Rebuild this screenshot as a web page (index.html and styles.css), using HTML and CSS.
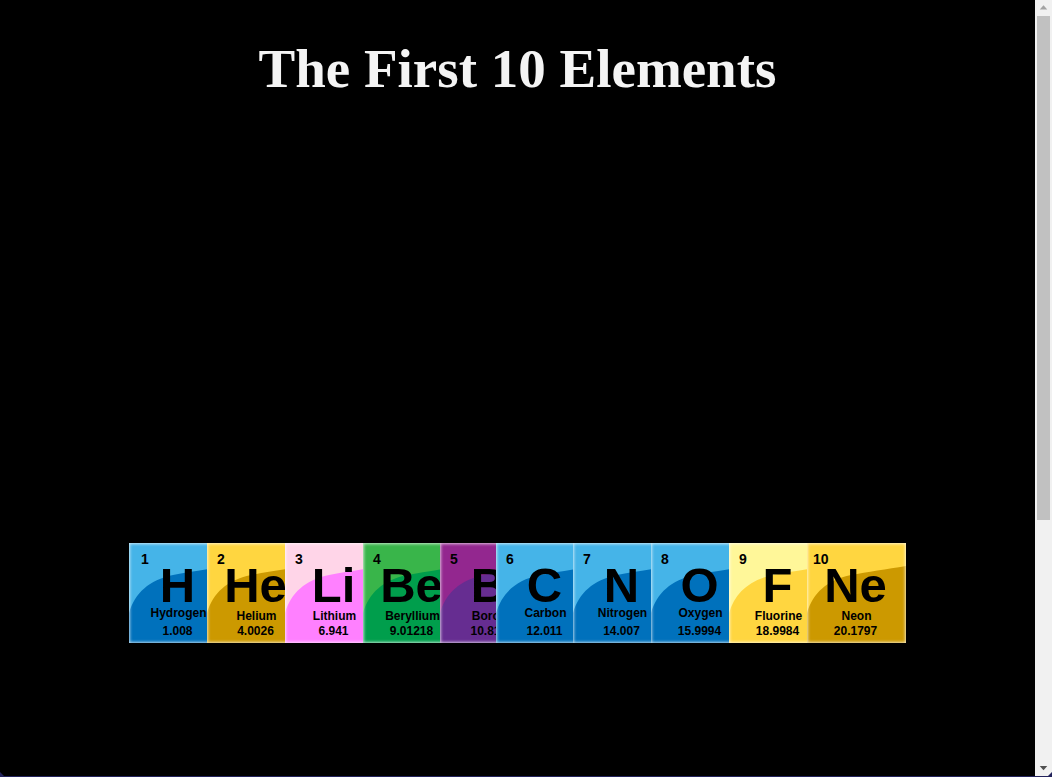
FILE: index.html
```html
<!DOCTYPE html>
<html lang="en">
<head>
    <meta charset="UTF-8">
    <meta name="viewport" content="width=device-width, initial-scale=1.0">
    <title>The First 10 Elements</title>
    <link rel="stylesheet" href="styles.css">
</head>
<body>
    <div class="page">
        <h1>The First 10 Elements</h1>
        <div class="table">
            <div class="tile w78 blue high"><div class="face"><svg class="curve" viewBox="0 0 99 100"><path d="M0 100V70C6 50 20 37 44 32C60 29 80 26 99 23V100Z"/></svg><span class="num one">1</span><span class="sym">H</span><span class="name">Hydrogen</span><span class="mass">1.008</span></div></div>
            <div class="tile w78 yellow"><div class="face"><svg class="curve" viewBox="0 0 99 100"><path d="M0 100V70C6 50 20 37 44 32C60 29 80 26 99 23V100Z"/></svg><span class="num">2</span><span class="sym">He</span><span class="name">Helium</span><span class="mass">4.0026</span></div></div>
            <div class="tile w78 pink"><div class="face"><svg class="curve" viewBox="0 0 99 100"><path d="M0 100V70C6 50 20 37 44 32C60 29 80 26 99 23V100Z"/></svg><span class="num">3</span><span class="sym">Li</span><span class="name">Lithium</span><span class="mass">6.941</span></div></div>
            <div class="tile w77 green"><div class="face"><svg class="curve" viewBox="0 0 99 100"><path d="M0 100V70C6 50 20 37 44 32C60 29 80 26 99 23V100Z"/></svg><span class="num">4</span><span class="sym">Be</span><span class="name">Beryllium</span><span class="mass">9.01218</span></div></div>
            <div class="tile w56 purple"><div class="face"><svg class="curve" viewBox="0 0 99 100"><path d="M0 100V70C6 50 20 37 44 32C60 29 80 26 99 23V100Z"/></svg><span class="num">5</span><span class="sym">B</span><span class="name">Boron</span><span class="mass">10.811</span></div></div>
            <div class="tile w77 blue high"><div class="face"><svg class="curve" viewBox="0 0 99 100"><path d="M0 100V70C6 50 20 37 44 32C60 29 80 26 99 23V100Z"/></svg><span class="num">6</span><span class="sym">C</span><span class="name">Carbon</span><span class="mass">12.011</span></div></div>
            <div class="tile w78 blue high"><div class="face"><svg class="curve" viewBox="0 0 99 100"><path d="M0 100V70C6 50 20 37 44 32C60 29 80 26 99 23V100Z"/></svg><span class="num">7</span><span class="sym">N</span><span class="name">Nitrogen</span><span class="mass">14.007</span></div></div>
            <div class="tile w78 blue high"><div class="face"><svg class="curve" viewBox="0 0 99 100"><path d="M0 100V70C6 50 20 37 44 32C60 29 80 26 99 23V100Z"/></svg><span class="num">8</span><span class="sym">O</span><span class="name">Oxygen</span><span class="mass">15.9994</span></div></div>
            <div class="tile w78 cream"><div class="face"><svg class="curve" viewBox="0 0 99 100"><path d="M0 100V70C6 50 20 37 44 32C60 29 80 26 99 23V100Z"/></svg><span class="num">9</span><span class="sym">F</span><span class="name">Fluorine</span><span class="mass">18.9984</span></div></div>
            <div class="tile w99 yellow"><div class="face"><svg class="curve" viewBox="0 0 99 100"><path d="M0 100V70C6 50 20 37 44 32C60 29 80 26 99 23V100Z"/></svg><span class="num ten">10</span><span class="sym">Ne</span><span class="name">Neon</span><span class="mass">20.1797</span></div></div>
        </div>
    </div>
    <div class="scrollbar">
        <svg class="arrow" viewBox="0 0 17 17"><path d="M8.5 5.5L12.5 10H4.5Z"/></svg>
        <div class="thumb"></div>
        <svg class="arrow bottom" viewBox="0 0 17 17"><path d="M8.5 11L12.5 6.5H4.5Z"/></svg>
    </div>
    <div class="corner left"></div>
    <div class="corner right"></div>
</body>
</html>
```

FILE: styles.css
```css
html, body {
    height: 100%;
}
body {
    margin: 0;
    position: relative;
    display: flex;
    height: 777px;
    overflow: hidden;
    background-color: #000;
    border-bottom: 1px solid #23235c;
    box-sizing: border-box;
}
.page {
    flex: 1;
    display: flex;
    flex-direction: column;
    align-items: center;
}
h1 {
    margin: 37px 0 0;
    height: 506px;
    color: #f4f4f4;
    font-family: 'Liberation Serif', serif;
    font-size: 55px;
    line-height: 63px;
    font-weight: bold;
}
.table {
    display: flex;
}
.tile {
    height: 100px;
    overflow: hidden;
}
.w56 { width: 56px; }
.w77 { width: 77px; }
.w78 { width: 78px; }
.w99 { width: 99px; }
.face {
    position: relative;
    width: 99px;
    height: 100px;
    display: flex;
    flex-direction: column;
    align-items: center;
    color: #000;
    font-family: 'Liberation Sans', sans-serif;
    font-weight: bold;
    background: var(--light);
}
.face::after {
    content: "";
    position: absolute;
    inset: 0;
    box-shadow: inset 0 0 3px 1px rgba(255, 255, 255, 0.7);
}
.curve {
    position: absolute;
    inset: 0;
    width: 100%;
    height: 100%;
    fill: var(--dark);
}
.num, .sym, .name, .mass {
    position: relative;
}
.num {
    align-self: flex-start;
    margin: 8px 0 0 10px;
    height: 16px;
    font-size: 14px;
    line-height: 16px;
}
.num.one {
    margin-left: 12px;
}
.num.ten {
    margin-left: 6px;
}
.sym {
    margin-right: 2px;
    height: 36px;
    font-size: 49px;
    line-height: 36px;
}
.name {
    margin-top: 6px;
    height: 14px;
    font-size: 12px;
    line-height: 14px;
    white-space: nowrap;
}
.mass {
    margin-top: 1px;
    margin-right: 2px;
    height: 14px;
    font-size: 12px;
    line-height: 14px;
}
.high .name {
    margin-top: 3px;
}
.high .mass {
    margin-top: 4px;
}
.blue { --light: #45b4e8; --dark: #0071bc; }
.yellow { --light: #ffd640; --dark: #cc9900; }
.pink { --light: #ffd5e8; --dark: #ff80ff; }
.green { --light: #39b54a; --dark: #009e4c; }
.purple { --light: #93278f; --dark: #662d91; }
.cream { --light: #fff799; --dark: #ffd640; }
.scrollbar {
    flex: none;
    width: 17px;
    height: 776px;
    display: flex;
    flex-direction: column;
    align-items: center;
    background-color: #f1f1f1;
}
.arrow {
    flex: none;
    width: 17px;
    height: 16px;
    fill: #a3a3a3;
}
.arrow.bottom {
    margin-top: auto;
    fill: #505050;
}
.thumb {
    width: 13px;
    height: 504px;
    background-color: #c1c1c1;
}
.corner {
    position: absolute;
    bottom: 0;
    width: 4px;
    height: 4px;
    background-color: #23235c;
}
.corner.left {
    left: 0;
    clip-path: polygon(0 0, 100% 100%, 0 100%);
}
.corner.right {
    right: 0;
    clip-path: polygon(100% 0, 100% 100%, 0 100%);
}
```
